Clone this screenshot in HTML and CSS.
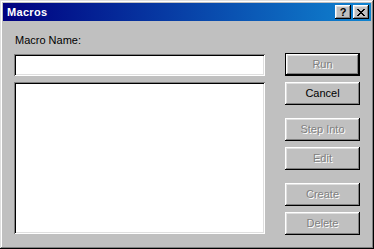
FILE: index.html
```html
<!DOCTYPE html>
<html>
<head>
<meta charset="utf-8">
<link rel="stylesheet" href="styles.css">
</head>
<body>
<div class="window">
  <div class="titlebar">
    <span class="title">Macros</span>
    <div class="tb-buttons">
      <button class="tb-btn help">?</button>
      <button class="tb-btn close" aria-label="Close">
        <svg width="8" height="7" viewBox="0 0 8 7" shape-rendering="crispEdges">
          <path d="M0 0h2v1H0zM6 0h2v1H6zM1 1h2v1H1zM5 1h2v1H5zM2 2h4v1H2zM3 3h2v1H3zM2 4h4v1H2zM1 5h2v1H1zM5 5h2v1H5zM0 6h2v1H0zM6 6h2v1H6z" fill="#000"/>
        </svg>
      </button>
    </div>
  </div>
  <div class="client">
    <div class="left">
      <label class="label">Macro Name:</label>
      <div class="field input"></div>
      <div class="field listbox"></div>
    </div>
    <div class="right">
      <div class="group">
        <button class="btn default disabled">Run</button>
        <button class="btn">Cancel</button>
      </div>
      <div class="group">
        <button class="btn disabled">Step Into</button>
        <button class="btn disabled">Edit</button>
      </div>
      <div class="group">
        <button class="btn disabled">Create</button>
        <button class="btn disabled">Delete</button>
      </div>
    </div>
  </div>
</div>
</body>
</html>
```
FILE: styles.css
```css
html, body {
  margin: 0;
  padding: 0;
  background: #c0c0c0;
}
body {
  font-family: "Liberation Sans", Arial, sans-serif;
  font-size: 11px;
  color: #000;
}
.window {
  width: 374px;
  height: 249px;
  box-sizing: border-box;
  padding: 3px;
  background: #c0c0c0;
  box-shadow: inset -1px -1px #000, inset 1px 1px #dfdfdf, inset -2px -2px #808080, inset 2px 2px #fff;
  display: flex;
  flex-direction: column;
}
.titlebar {
  height: 18px;
  background: linear-gradient(to right, #000080, #1084d0);
  display: flex;
  align-items: center;
  justify-content: space-between;
  padding: 0 2px 0 4px;
}
.title {
  color: #fff;
  font-weight: bold;
  font-size: 11px;
  letter-spacing: 0.3px;
  line-height: 18px;
}
.tb-buttons {
  display: flex;
  gap: 2px;
}
.tb-btn {
  width: 16px;
  height: 14px;
  margin: 0;
  padding: 0;
  border: none;
  background: #c0c0c0;
  box-shadow: inset -1px -1px #000, inset 1px 1px #fff, inset -2px -2px #808080, inset 2px 2px #dfdfdf;
  display: flex;
  align-items: center;
  justify-content: center;
  font-family: "Liberation Sans", Arial, sans-serif;
  font-weight: bold;
  font-size: 11px;
  line-height: 14px;
  color: #000;
}
.tb-btn.help {
  padding-top: 0;
}
.tb-btn.close svg {
  display: block;
  margin-left: 0;
  margin-top: 0;
}
.client {
  flex: 1;
  display: flex;
  padding: 0 11px 0 11px;
}
.left {
  width: 251px;
  display: flex;
  flex-direction: column;
}
.label {
  display: block;
  margin-top: 13px;
  line-height: 13px;
  height: 13px;
  padding-left: 1px;
}
.field {
  background: #fff;
  box-sizing: border-box;
  box-shadow: inset 1px 1px #808080, inset -1px -1px #fff, inset 2px 2px #000, inset -2px -2px #dfdfdf;
}
.input {
  margin-top: 7px;
  height: 22px;
}
.listbox {
  margin-top: 6px;
  height: 152px;
}
.right {
  margin-left: 20px;
  margin-top: 32px;
  display: flex;
  flex-direction: column;
  gap: 13px;
}
.group {
  display: flex;
  flex-direction: column;
  gap: 6px;
}
.btn {
  width: 75px;
  height: 23px;
  margin: 0;
  padding: 0;
  border: none;
  box-sizing: border-box;
  background: #c0c0c0;
  box-shadow: inset -1px -1px #000, inset 1px 1px #fff, inset -2px -2px #808080, inset 2px 2px #dfdfdf;
  font-family: "Liberation Sans", Arial, sans-serif;
  font-size: 11px;
  color: #000;
  text-align: center;
  line-height: 21px;
}
.btn.default {
  border: 1px solid #000;
}
.btn.disabled {
  color: #808080;
  text-shadow: 1px 1px #fff;
}
```
